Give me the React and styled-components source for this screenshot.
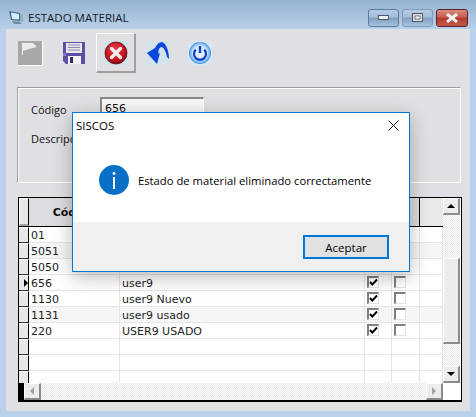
import React from "react";
import styled, { createGlobalStyle } from "styled-components";

const GlobalStyle = createGlobalStyle`
  html, body {
    margin: 0;
    padding: 0;
    background: #b9d1ea;
  }
`;

const Window = styled.div`
  position: relative;
  width: 476px;
  height: 417px;
  overflow: hidden;
  display: flex;
  flex-direction: column;
  background: linear-gradient(#97b3d0 0, #b9d1ea 30px);
  font-family: "Liberation Sans", sans-serif;
`;

const TitleBar = styled.div`
  height: 30px;
  box-sizing: border-box;
  display: flex;
  align-items: center;
  padding: 6px 8px 0 9px;
  color: #101a24;
  font-family: "Open Sans", sans-serif;
  font-size: 11.5px;
`;

const Caption = styled.span`
  margin-left: 5px;
  flex: 1;
`;

const Controls = styled.div`
  display: flex;
  gap: 3px;
`;

const CtrlButton = styled.div`
  width: ${(p) => (p.$close ? 32 : 31)}px;
  height: 18px;
  box-sizing: border-box;
  border: 1px solid ${(p) => (p.$close ? "#5a2030" : p.$dim ? "#7f9bb8" : "#5f7a96")};
  border-radius: 3px;
  display: flex;
  align-items: center;
  justify-content: center;
  background: ${(p) =>
    p.$close
      ? "linear-gradient(#d88a7c 0, #c8604f 45%, #b23a2b 50%, #c25a48 100%)"
      : "linear-gradient(#b4cde6 0, #a3bedb 45%, #7f9fc2 50%, #a6c2de 100%)"};
`;

const Client = styled.div`
  flex: 1;
  margin: 0 6px 6px;
  background: #e0dfe3;
  display: flex;
  flex-direction: column;
`;

const Toolbar = styled.div`
  height: 58px;
  padding: 4px 0 0 3px;
  box-sizing: border-box;
  display: grid;
  grid-template-columns: 43px 43px 42px 42px 42px;
  justify-content: start;
  align-items: start;
  justify-items: center;
`;

const ToolButton = styled.div`
  width: 40px;
  height: 40px;
  box-sizing: border-box;
  display: flex;
  align-items: center;
  justify-content: center;
  border: 1px solid transparent;
  ${(p) =>
    p.$pressed &&
    `border-top: 1px solid #fff;
     border-left: 1px solid #fff;
     border-right: 2px solid #a0a0a0;
     border-bottom: 2px solid #a0a0a0;`}
`;

const Panel = styled.div`
  margin: 0 9px 0 11px;
  height: 96px;
  box-sizing: border-box;
  border-top: 1px solid #9d9da1;
  border-left: 1px solid #9d9da1;
  border-right: 1px solid #fff;
  border-bottom: 1px solid #fff;
  box-shadow: inset 1px 1px 0 #fff, 0 0 0 0 #9d9da1;
  padding: 9px 0 0 13px;
  display: grid;
  grid-template-columns: 69px 104px;
  grid-template-rows: 20px 20px;
  row-gap: 9px;
  align-items: center;
  color: #111;
`;

const Label = styled.label`
  font-family: "Open Sans", sans-serif;
  font-size: 11px;
  margin-top: 4px;
`;

const TextInput = styled.div`
  height: 20px;
  box-sizing: border-box;
  background: #f7f7f7;
  border-top: 2px solid #8a8a8a;
  border-left: 2px solid #8a8a8a;
  border-right: 1px solid #fff;
  padding: 3px 0 0 3px;
  font-family: "DejaVu Sans", sans-serif;
  font-size: 11px;
  line-height: 14px;
`;

const GridFrame = styled.div`
  margin: 14px 8px 9px 12px;
  flex: 1;
  box-sizing: border-box;
  border: 1px solid #000;
  border-bottom-width: 2px;
  background: #fff;
  display: grid;
  grid-template-columns: 424px 17px;
  grid-template-rows: 185px 17px;
  font-family: "DejaVu Sans", sans-serif;
  font-size: 11px;
  color: #222;
`;

const Table = styled.div`
  overflow: hidden;
  display: flex;
  flex-direction: column;
`;

const HeaderRow = styled.div`
  display: grid;
  grid-template-columns: 10px 91px 245px 27px 28px 23px;
  height: 29px;
  flex: none;
  background: #e1e0e4;
  border-bottom: 1px solid #000;
  box-sizing: border-box;
`;

const HeaderCorner = styled.div`
  border-top: 1px solid #fff;
  border-left: 1px solid #fff;
  border-right: 1px solid #000;
  border-bottom: 2px solid #a0a0a0;
  background: #e8e8e8;
`;

const HeaderCell = styled.div`
  border-right: ${(p) => (p.$last ? "none" : "1px solid #000")};
  background: ${(p) => (p.$last ? "#e9e9e9" : "#dcdbdf")};
  display: flex;
  align-items: center;
  justify-content: center;
  font-weight: bold;
  font-size: 11px;
  color: #111;
`;

const Row = styled.div`
  display: grid;
  grid-template-columns: 10px 91px 245px 27px 28px 23px;
  height: 16px;
  flex: none;
  background: ${(p) => (p.$alt ? "#f6f6f6" : "#fff")};
`;

const RowHeader = styled.div`
  background: #e8e8e8;
  border-right: 1px solid #000;
  border-bottom: 1px solid #333;
  border-top: 1px solid #fff;
  box-sizing: border-box;
  display: flex;
  align-items: center;
  justify-content: flex-end;
`;

const Arrow = styled.span`
  width: 0;
  height: 0;
  border-left: 4px solid #000;
  border-top: 4px solid transparent;
  border-bottom: 4px solid transparent;
`;

const Cell = styled.div`
  border-right: 1px solid #e6e6e6;
  border-bottom: 1px solid #e6e6e6;
  box-sizing: border-box;
  padding: 1px 0 0 2px;
  line-height: 15px;
  white-space: nowrap;
  overflow: hidden;
`;

const CheckCell = styled(Cell)`
  padding: 1px 0 0 2px;
`;

const CheckBox = styled.div`
  width: 12px;
  height: 12px;
  box-sizing: border-box;
  background: #fff;
  border-top: 2px solid #808080;
  border-left: 2px solid #808080;
  border-right: 1px solid #e4e4e4;
  border-bottom: 1px solid #e4e4e4;
  display: flex;
  align-items: center;
  justify-content: center;
`;

const VScroll = styled.div`
  display: flex;
  flex-direction: column;
  background: repeating-conic-gradient(#e6e6e6 0 25%, #fff 0 50%) 0 0 / 2px 2px;
`;

const HScroll = styled.div`
  display: flex;
  align-items: stretch;
  background: repeating-conic-gradient(#e6e6e6 0 25%, #fff 0 50%) 0 0 / 2px 2px;
`;

const ScrollCorner = styled.div`
  width: 5px;
  background: #000;
`;

const ScrollSpace = styled.div`
  flex: 1;
  flex-basis: ${(p) => (p.$top ? "43px" : "0")};
  flex-grow: ${(p) => (p.$top ? 0 : 1)};
`;

const ScrollBtn = styled.div`
  width: 17px;
  height: ${(p) => p.$h || 17}px;
  box-sizing: border-box;
  background: #ececec;
  border-top: 1px solid #fff;
  border-left: 1px solid #fff;
  border-right: 2px solid #8a8a8a;
  border-bottom: 2px solid #8a8a8a;
  display: flex;
  align-items: center;
  justify-content: center;
  flex: none;
`;

const Tri = styled.span`
  width: 0;
  height: 0;
  ${(p) =>
    p.$dir === "up" &&
    "border-left: 4px solid transparent; border-right: 4px solid transparent; border-bottom: 4px solid #000;"}
  ${(p) =>
    p.$dir === "down" &&
    "border-left: 4px solid transparent; border-right: 4px solid transparent; border-top: 4px solid #000;"}
  ${(p) =>
    p.$dir === "left" &&
    "border-top: 4px solid transparent; border-bottom: 4px solid transparent; border-right: 4px solid #a0a0a0;"}
  ${(p) =>
    p.$dir === "right" &&
    "border-top: 4px solid transparent; border-bottom: 4px solid transparent; border-left: 4px solid #a0a0a0;"}
`;

const Dialog = styled.div`
  position: absolute;
  left: 72px;
  top: 112px;
  width: 338px;
  height: 160px;
  box-sizing: border-box;
  border: 1px solid #0078d7;
  background: #fff;
  display: flex;
  flex-direction: column;
  box-shadow: 0 5px 18px rgba(0, 0, 0, 0.28);
  font-family: "Open Sans", sans-serif;
  color: #000;
`;

const DialogTitle = styled.div`
  height: 25px;
  display: flex;
  align-items: center;
  justify-content: space-between;
  padding: 0 10px 0 3px;
  font-size: 11.5px;
`;

const DialogBody = styled.div`
  flex: 1;
  display: flex;
  align-items: center;
  gap: 9px;
  padding: 0 0 0 26px;
  font-size: 11.25px;
`;

const DialogFooter = styled.div`
  height: 49px;
  background: #f0f0f0;
  display: flex;
  justify-content: flex-end;
  padding: 13px 20px 0 0;
  box-sizing: border-box;
`;

const AcceptButton = styled.div`
  width: 86px;
  height: 24px;
  box-sizing: border-box;
  border: 2px solid #0078d7;
  background: #e1e1e1;
  display: flex;
  align-items: center;
  justify-content: center;
  font-size: 11.5px;
`;

const MonitorIcon = () => (
  <svg width="14" height="15" viewBox="0 0 14 15">
    <path d="M0 1 L11 3 V11 L2 10 Z" fill="#3d6f8f" />
    <path d="M2 2.5 L10 4 V9.5 L3 9 Z" fill="#d8eef8" />
    <path d="M11 3 L14 5 V12 L11 11 Z" fill="#8fb0c6" />
    <path d="M3 11 L11 12 L13 14 H5 Z" fill="#6f8ea6" />
  </svg>
);

const FlagIcon = () => (
  <svg width="25" height="25" viewBox="0 0 25 25">
    <rect width="25" height="25" fill="#fff" />
    <rect width="24" height="24" fill="#a8a8a8" />
    <path d="M4 2 H15 L19 6 L11 8 L5 10 V14 H4 Z" fill="#ececec" />
  </svg>
);

const FloppyIcon = () => (
  <svg width="22" height="22" viewBox="0 0 22 22">
    <path d="M0 0 H22 V22 H3 L0 19 Z" fill="#5a50a6" />
    <rect x="3" y="1" width="16" height="10" fill="#e6e6ee" />
    <path d="M5 3 H17 M5 5.5 H17 M5 8 H17" stroke="#8c8ca8" strokeWidth="1" />
    <rect x="5" y="14" width="13" height="8" fill="#f2f2f6" />
    <rect x="7" y="15" width="3" height="6" fill="#33305e" />
    <rect x="0" y="11" width="3" height="3" fill="#8278c8" />
  </svg>
);

const StopIcon = () => (
  <svg width="24" height="24" viewBox="0 0 24 24">
    <defs>
      <radialGradient id="stopFill" cx="45%" cy="35%" r="70%">
        <stop offset="0" stopColor="#e8414a" />
        <stop offset="0.7" stopColor="#c00f1c" />
        <stop offset="1" stopColor="#6d0a12" />
      </radialGradient>
    </defs>
    <rect width="24" height="24" fill="#cfe3e8" />
    <circle cx="12" cy="12" r="11" fill="url(#stopFill)" stroke="#5d1015" strokeWidth="0.8" />
    <path d="M7.5 7.5 L16.5 16.5 M16.5 7.5 L7.5 16.5" stroke="#f4eaea" strokeWidth="3.4" strokeLinecap="round" />
  </svg>
);

const BackIcon = () => (
  <svg width="24" height="24" viewBox="0 0 24 24">
    <rect width="24" height="24" fill="#d2e4e8" />
    <path
      d="M1 12 L9 7 C11 3 13 1 16 1 C20 2 23 10 23 18 L21 16 C20 11 18 6 15 6 C13 7 12 10 12.5 13 L14 12 L11 23 Z"
      fill="#0a46e0"
    />
  </svg>
);

const PowerIcon = () => (
  <svg width="24" height="24" viewBox="0 0 24 24">
    <defs>
      <radialGradient id="powerFill" cx="50%" cy="50%" r="55%">
        <stop offset="0" stopColor="#f2f6ff" />
        <stop offset="0.6" stopColor="#cfe4fb" />
        <stop offset="0.85" stopColor="#58a4ee" />
        <stop offset="1" stopColor="#2a78d0" />
      </radialGradient>
    </defs>
    <rect width="24" height="24" fill="#d8e8ee" />
    <circle cx="12" cy="12" r="11" fill="url(#powerFill)" />
    <path d="M7.8 8.6 A6 6 0 1 0 16.2 8.6" fill="none" stroke="#0d3fc8" strokeWidth="2.2" />
    <path d="M12 5 V12" stroke="#0d3fc8" strokeWidth="2.4" />
  </svg>
);

const InfoIcon = () => (
  <svg width="30" height="30" viewBox="0 0 30 30">
    <circle cx="15" cy="15" r="15" fill="#0a6fc6" />
    <circle cx="15" cy="8.5" r="1.4" fill="#fff" />
    <rect x="14" y="12" width="2" height="12" fill="#fff" />
  </svg>
);

const CheckMark = () => (
  <svg width="9" height="9" viewBox="0 0 9 9">
    <path d="M1 4 L3.3 6.6 L8 1.5" fill="none" stroke="#000" strokeWidth="2" />
  </svg>
);

const CloseGlyph = () => (
  <svg width="11" height="11" viewBox="0 0 11 11">
    <path d="M0.5 0.5 L10.5 10.5 M10.5 0.5 L0.5 10.5" stroke="#111" strokeWidth="1" />
  </svg>
);

const rows = [
  { code: "01", checks: true, alt: false },
  { code: "5051", checks: true, alt: true },
  { code: "5050", checks: true, alt: false },
  { code: "656", name: "user9", checks: true, current: true },
  { code: "1130", name: "user9 Nuevo", checks: true },
  { code: "1131", name: "user9 usado", checks: true, alt: true },
  { code: "220", name: "USER9 USADO", checks: true },
  {},
  {},
  {},
];

const App = () => {
  return (
    <Window>
      <GlobalStyle />
      <TitleBar>
        <MonitorIcon />
        <Caption>ESTADO MATERIAL</Caption>
        <Controls>
          <CtrlButton>
            <svg width="11" height="5" viewBox="0 0 11 5">
              <rect x="0.5" y="0.5" width="10" height="4" fill="#eee" stroke="#556" />
            </svg>
          </CtrlButton>
          <CtrlButton $dim>
            <svg width="11" height="9" viewBox="0 0 11 9">
              <rect x="0.5" y="0.5" width="10" height="8" fill="#d8dde4" stroke="#556" />
              <rect x="3" y="3" width="5" height="3" fill="#fff" stroke="#556" strokeWidth="0.8" />
            </svg>
          </CtrlButton>
          <CtrlButton $close>
            <svg width="14" height="10" viewBox="0 0 14 10">
              <path d="M2 1 L12 9 M12 1 L2 9" stroke="#f2f2f2" strokeWidth="3" />
            </svg>
          </CtrlButton>
        </Controls>
      </TitleBar>
      <Client>
        <Toolbar>
          <ToolButton><FlagIcon /></ToolButton>
          <ToolButton><FloppyIcon /></ToolButton>
          <ToolButton $pressed><StopIcon /></ToolButton>
          <ToolButton><BackIcon /></ToolButton>
          <ToolButton><PowerIcon /></ToolButton>
        </Toolbar>
        <Panel>
          <Label>Código</Label>
          <TextInput>656</TextInput>
          <Label>Descripción</Label>
        </Panel>
        <GridFrame>
          <Table>
            <HeaderRow>
              <HeaderCorner />
              <HeaderCell>Código</HeaderCell>
              <HeaderCell>Descripción</HeaderCell>
              <HeaderCell />
              <HeaderCell />
              <HeaderCell $last />
            </HeaderRow>
            {rows.map((r, i) => (
              <Row key={i} $alt={r.alt}>
                <RowHeader>{r.current && <Arrow />}</RowHeader>
                <Cell>{r.code}</Cell>
                <Cell>{r.name}</Cell>
                <CheckCell>
                  {r.checks && <CheckBox><CheckMark /></CheckBox>}
                </CheckCell>
                <CheckCell>{r.checks && <CheckBox />}</CheckCell>
                <Cell />
              </Row>
            ))}
          </Table>
          <VScroll>
            <ScrollBtn><Tri $dir="up" /></ScrollBtn>
            <ScrollSpace $top />
            <ScrollBtn $h={86} />
            <ScrollSpace />
            <ScrollBtn><Tri $dir="down" /></ScrollBtn>
          </VScroll>
          <HScroll>
            <ScrollCorner />
            <ScrollBtn><Tri $dir="left" /></ScrollBtn>
            <ScrollSpace />
            <ScrollBtn><Tri $dir="right" /></ScrollBtn>
          </HScroll>
        </GridFrame>
      </Client>
      <Dialog>
        <DialogTitle>
          <span>SISCOS</span>
          <CloseGlyph />
        </DialogTitle>
        <DialogBody>
          <InfoIcon />
          <span>Estado de material eliminado correctamente</span>
        </DialogBody>
        <DialogFooter>
          <AcceptButton>Aceptar</AcceptButton>
        </DialogFooter>
      </Dialog>
    </Window>
  );
};

export default App;
